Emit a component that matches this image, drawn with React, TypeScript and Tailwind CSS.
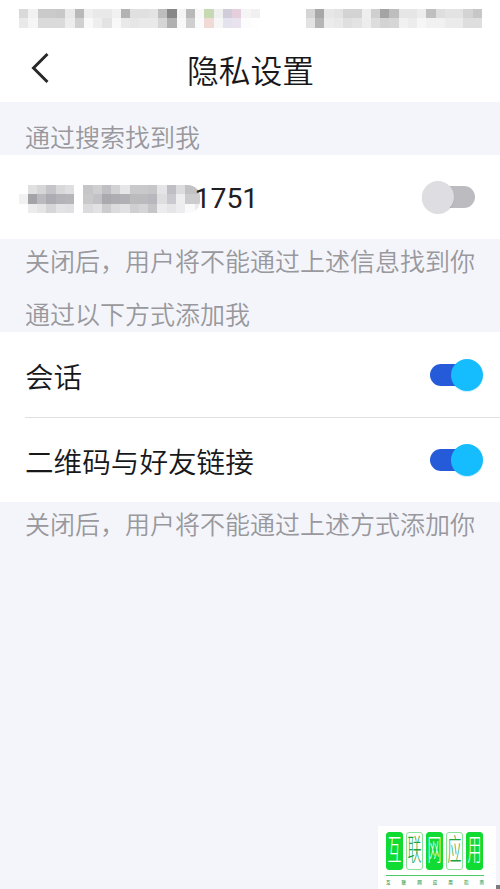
import clsx from "clsx";

/**
 * Privacy settings — search visibility and the ways people can add me.
 */

// 9px censor tiles, one entry per column. "" leaves the tile empty.
const STATUS_LEFT: string[][] = [
  ["#d9d9d9", "#f1f1f1", "#cacaca", "#cacaca", "#c8c8c8", "#e9e9e9", "#b9b9b9", "#efefef", "#e9e9e9", "#e9e9e9", "#f1f1f1", "#b3b3b3", "#e0e0e0", "#e0e0e0", "#e3e3e3", "#bdbdbd", "#868686", "#f4f4f4", "#b9b9b9", "#f8f8f8", "#c5d9b2", "#f0f0f0", "#d0ccd9", "#e6cfdd", "#f5f5f5", "#f0f0f0"],
  ["#e9e9e9", "#f5f5f5", "#dadada", "#dadada", "#dadada", "#ededed", "#d0d0d0", "#f9f9f9", "#eeeeee", "#e3e3e3", "#f8f8f8", "#e9e9e9", "#e6e6e6", "#e9e9e9", "#e9e9e9", "#d5d5d5", "#b0b0b0", "#f8f8f8", "#cfcfcf", "#fafafa", "#f1d9d6", "#f6f6f6", "#e4e3ed", "#e8e3ee", "#fcfcfc", "#fefefe"],
];

const STATUS_RIGHT: string[][] = [
  ["#d5d5d5", "#a8a8a8", "#e7e7e7", "#e3e3e3", "#d3d3d3", "#d3d3d3", "#eeeeee", "#cfcfcf", "#a4a4a4", "#bebebe", "#e6e6e6", "#e6e6e6", "#ededed", "#bfbfbf", "#dedede", "#e3e3e3", "#e3e3e3", "#d3d3d3", "#c7c7c7"],
  ["#e3e3e3", "#b5b5b5", "#ececec", "#e9e9e9", "#dfdfdf", "#e3e3e3", "#ededed", "#dddddd", "#d3d3d3", "#d6d6d6", "#f1f1f1", "#ececec", "#f6f6f6", "#f1f1f1", "#f1f1f1", "#ebebeb", "#ebebeb", "#dedede", "#dedede"],
];

const PHONE: string[][] = [
  ["", "#e0e0e1", "#d6d6d8", "#c5c5c9", "#d8d8da", "#dfdfe1", "", "#c6c6c9", "#cfcfd2", "#c0c0c4", "#d2d2d4", "#e6e6e8", "#c9c9cc", "#c9c9cc", "#c6c6c9", "#e5e5e8", "#bebec4", "#dcdcdf", "#c2c2c4", "#c2c2c4"],
  ["#f1f1f1", "#a4a4a8", "#bbbbbf", "#acacb2", "#b3b3b8", "#b5b5ba", "", "#c9c9cc", "#c2c2c6", "#aaaaae", "#aeaeb2", "#b1b1b5", "#bbbbbe", "#bbbbbe", "#b7b7bd", "#dedee1", "#c9c9cf", "#eeeeef", "#ccccce", "#ccccce"],
  ["", "#ececec", "#e5e5e6", "#d6d6d9", "#e3e3e5", "#e1e1e3", "", "#dbdbde", "#e2e2e4", "#cccccf", "#dbdbde", "#e1e1e3", "#cfcfd2", "#d5d5d7", "#c5c5c8", "#ececee", "#e6e6e9", "#ededef", "#fafafa", "#ececec"],
];

const LOGO = [
  { char: "互", filled: true },
  { char: "联", filled: false },
  { char: "网", filled: true },
  { char: "应", filled: false },
  { char: "用", filled: true },
];

function Mosaic({ rows, className }: { rows: string[][]; className?: string }) {
  return (
    <div className={clsx("shrink-0 overflow-hidden", className)} aria-hidden>
      {rows.map((row, y) => (
        <div key={y} className="flex">
          {row.map((color, x) => (
            <span
              key={x}
              className="h-[9.25px] w-[9.28px] shrink-0"
              style={{ backgroundColor: color || "transparent" }}
            />
          ))}
        </div>
      ))}
    </div>
  );
}

function Toggle({ on = false }: { on?: boolean }) {
  return (
    <button
      type="button"
      role="switch"
      aria-checked={on}
      className={clsx("flex h-8 w-[53px] shrink-0 items-center", on && "justify-end")}
    >
      <span
        className={clsx(
          "flex h-[22px] w-[53px] items-center rounded-full bg-linear-to-r",
          on
            ? "justify-end from-[#255bd8] from-60% to-transparent to-60%"
            : "from-transparent from-40% to-[#bbbbc0] to-40%",
        )}
      >
        <span
          className={clsx(
            "size-8 shrink-0 rounded-full",
            on ? "bg-[#15bdff] shadow-[0_1px_1px_#15bdff40]" : "bg-[#dddde2] shadow-[0_1px_1px_#00000026]",
          )}
        />
      </span>
    </button>
  );
}

function Note({ children, className }: { children: string; className?: string }) {
  return (
    <p className={clsx("flex items-center whitespace-nowrap pl-[25px] text-[25px] leading-none font-[350] text-[#98989d]", className)}>
      {children}
    </p>
  );
}

function Row({ label, className }: { label: string; className?: string }) {
  return (
    <div className={clsx("flex items-center justify-between pr-[17px] text-[28.6px] leading-none font-[350] text-[#18181b]", className)}>
      <span className="pt-[7px]">{label}</span>
      <Toggle on />
    </div>
  );
}

function Watermark() {
  return (
    <div className="absolute top-[826px] left-[378px] h-[63px] w-[118px] bg-white pt-[6px] pl-2">
      <div className="flex gap-[3px]">
        {LOGO.map(({ char, filled }) => (
          <span
            key={char}
            className={clsx(
              "flex h-[38px] w-[17px] items-center justify-center rounded-[3px] border",
              filled ? "border-[#10db32] bg-[#10db32] text-white" : "border-[#8be09a] bg-white text-[#20a53a]",
            )}
          >
            <span className="-translate-y-px scale-y-[2.1] text-[14px] leading-none font-light">{char}</span>
          </span>
        ))}
      </div>
      <div className="mt-[5px] h-px w-[98px] bg-[#4fc765]" />
      <p className="mt-[5px] flex w-[98px] justify-between text-[4.5px] leading-none font-medium text-[#3aa050]">
        {"互联网应用指南".split("").map((char) => (
          <span key={char}>{char}</span>
        ))}
      </p>
    </div>
  );
}

export default function App() {
  return (
    <main className="relative flex h-[889px] w-[500px] flex-col overflow-hidden bg-[#f4f5fa] font-['Roboto','Noto_Sans_CJK_SC',sans-serif]">
      <header className="h-[102px] bg-white">
        <div className="flex h-9 items-start justify-between pt-[9px] pr-[18px] pl-[19px]">
          <Mosaic rows={STATUS_LEFT} />
          <Mosaic rows={STATUS_RIGHT} />
        </div>
        <div className="grid h-[66px] grid-cols-[60px_1fr_60px] items-center">
          <svg viewBox="0 0 18 32" className="mb-0.5 ml-[31px] h-8 w-[18px]" fill="none" stroke="#29292c" strokeWidth="3">
            <path d="M16.5 2 2.5 16l14 14" />
          </svg>
          <h1 className="pt-[7px] pl-px text-center text-[31.8px] leading-none font-[350] text-[#18181b]">隐私设置</h1>
        </div>
      </header>

      <Note className="h-[53px] pt-[19px]">通过搜索找到我</Note>
      <div className="flex h-[84px] items-center bg-white pr-[25px] pl-[18.5px]">
        <Mosaic rows={PHONE} className="mt-1 w-[181px] rounded-r-xl" />
        <span className="-ml-[5px] flex-1 pt-[5px] text-[28.4px] leading-none text-[#202024]">1751</span>
        <Toggle />
      </div>

      <Note className="h-[47px]">关闭后，用户将不能通过上述信息找到你</Note>
      <Note className="h-[46px] pt-[12px]">通过以下方式添加我</Note>
      <section className="bg-white pl-[25px]">
        <Row label="会话" className="h-[85px]" />
        <Row label="二维码与好友链接" className="h-[85px] border-t border-[#dfdfe2]" />
      </section>
      <Note className="h-[43px] pt-[3px]">关闭后，用户将不能通过上述方式添加你</Note>

      <Watermark />
      <span className="absolute right-0 bottom-0 h-1 w-1 bg-[#777c80]" />
    </main>
  );
}
